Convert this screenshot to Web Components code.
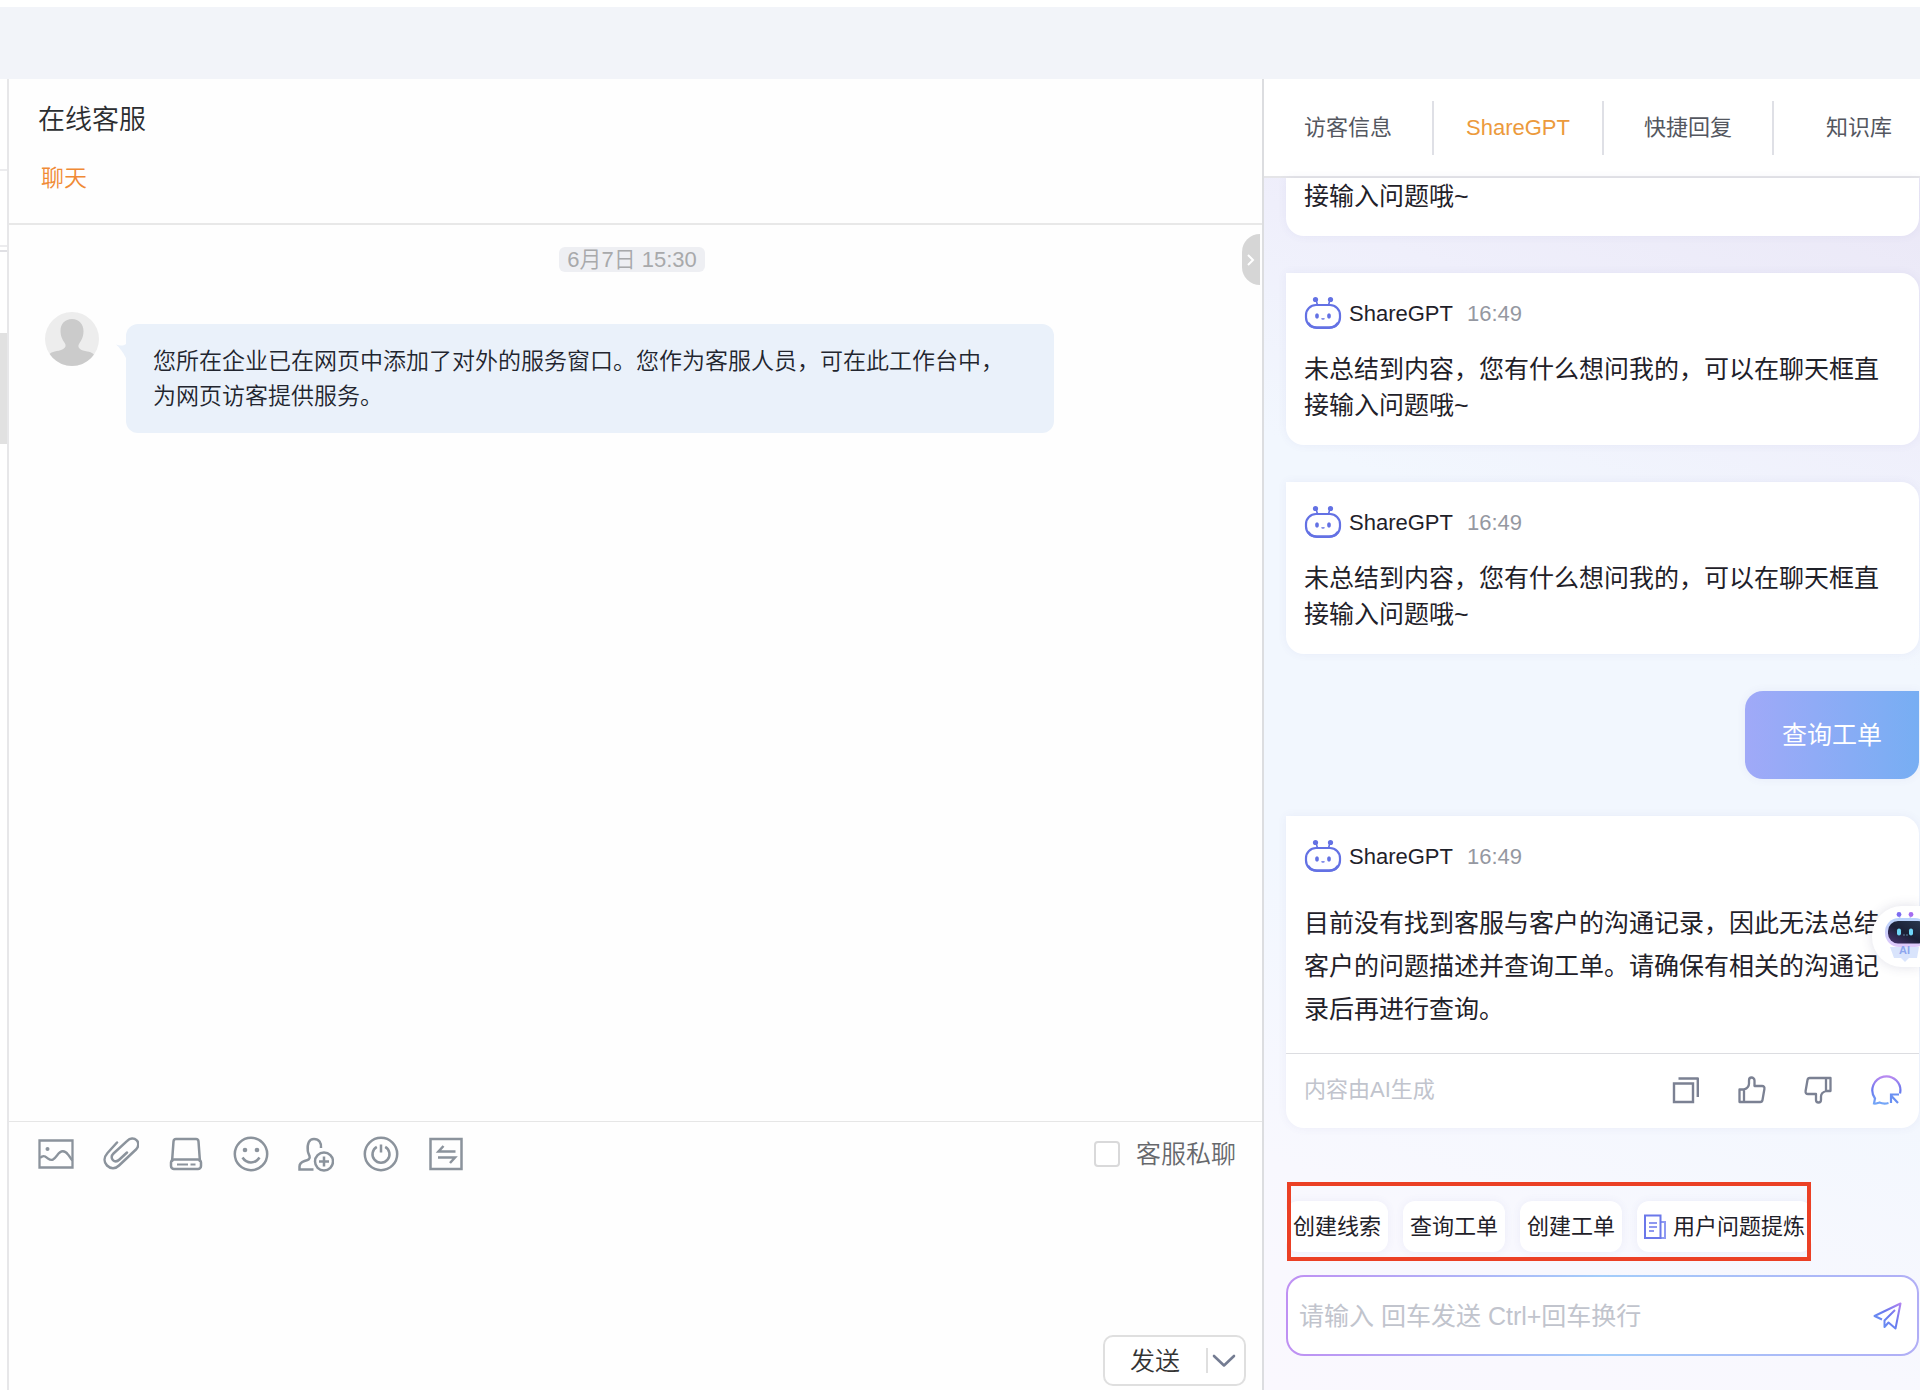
<!DOCTYPE html>
<html lang="zh-CN">
<head>
<meta charset="utf-8">
<meta name="viewport" content="width=device-width, initial-scale=1">
<title>在线客服</title>
<style>
  html, body { margin: 0; }
  body {
    font-family: "Liberation Sans", "Noto Sans CJK SC", sans-serif;
    color: #1f2129;
    background: #fff;
  }
</style>
</head>
<body>
<service-desk></service-desk>

<script>
const base = `
  *, *::before, *::after { box-sizing: border-box; }
  button, input, textarea { font: inherit; color: inherit; margin: 0; padding: 0; border: 0; background: none; outline: none; }
  button { cursor: pointer; }
`;
function define(name, css, html) {
  const tpl = document.createElement('template');
  tpl.innerHTML = `<style>${base}${css}</style>${html}`;
  customElements.define(name, class extends HTMLElement {
    constructor() {
      super();
      this.attachShadow({ mode: 'open' }).append(tpl.content.cloneNode(true));
    }
  });
}

const icons = {
  image: ['0 0 36 36', `<g fill="none" stroke="currentColor" stroke-width="2.300"><path d="M1.500 4.500h33v27h-33z"/><path d="M2 22c4-4 6-1 8 .500 4 3 6 1 9-3 4-6 8-5 11-1 2 2.500 3 4.500 4.500 6"/></g><circle cx="9.500" cy="13" r="2" fill="currentColor"/>`],
  clip: ['0 0 36 36', `<path d="M14 6.500 4.500 17c-3.500 4-4 9-.5 12.500 3.500 3.500 8.500 3.500 12 0L33 13.500c3-3 3-7 .500-9.300-2.500-2.500-6.500-2.200-9.300.600L10.500 17.500c-2.300 2.200-2.300 5-.600 6.600 1.800 1.700 4.500 1.400 6.600-.600l7.500-7" fill="none" stroke="currentColor" stroke-width="2.500" stroke-linecap="round" stroke-linejoin="round"/>`],
  disk: ['0 0 36 36', `<g fill="none" stroke="currentColor" stroke-width="2.500" stroke-linejoin="round"><path d="M4 26 5.500 5.500Q5.700 3 8 3h20q2.300 0 2.500 2.500L32 26"/><rect x="3" y="23.500" width="30" height="9.500" rx="3"/></g><path d="M9 28.500h11M22.500 28.500h5" stroke="currentColor" stroke-width="2"/>`],
  smile: ['0 0 36 36', `<circle cx="18" cy="18" r="16.200" fill="none" stroke="currentColor" stroke-width="2.500"/><circle cx="12" cy="14" r="2.300" fill="currentColor"/><circle cx="24" cy="14" r="2.300" fill="currentColor"/><path d="M9.500 21.500c4 6.500 13 6.500 17 0" fill="none" stroke="currentColor" stroke-width="2.500"/>`],
  invite: ['0 0 36 36', `<g fill="none" stroke="currentColor" stroke-width="2.500"><path d="M15.500 33.500H1.500v-3c0-3.500 2-4.500 5-5.500 4-1.200 6-2 5-5-.500-1.500-1.500-3-1.700-5C9 7.500 11 3 16 3s7.500 3.500 7 9"/><circle cx="26" cy="25.500" r="9"/><path d="M26 20.500v10M21 25.500h10"/></g>`],
  power: ['0 0 36 36', `<g fill="none" stroke="currentColor" stroke-width="2.500"><circle cx="18" cy="18" r="16.200"/><path d="M18 8.500v8"/><path d="M13.800 10.800a8.500 8.500 0 1 0 8.400 0"/></g>`],
  swap: ['0 0 36 36', `<g fill="none" stroke="currentColor" stroke-width="2.500"><path d="M2.500 3h31v30h-31z"/><path d="M27.500 15.500H10.500l5-5.500M10 21.500h17l-5 5.500"/></g>`],
  copy: ['0 0 28 28', `<g fill="none" stroke="currentColor" stroke-width="2.400"><path d="M2 7.500h19V26H2z"/><path d="M6.500 2.500h19.300V21" stroke-linejoin="round"/></g>`],
  up: ['0 0 28 28', `<g fill="none" stroke="currentColor" stroke-width="2.300" stroke-linejoin="round"><path d="M1.500 13.500h4.500V26h-4.500zM6 13.500c3-1 5-3 5-6V4.500C11 2.800 12 1.500 13.500 1.500S16.500 2.800 16.500 4.500V10H24c1.800 0 2.700 1.200 2.400 3L24.500 24c-.200 1.300-1 2-2.300 2H6"/></g>`],
  down: ['0 0 28 28', `<g fill="none" stroke="currentColor" stroke-width="2.300" stroke-linejoin="round"><path d="M26.500 15h-4.500V2h4.500zM22 15c-3 1-5 2.500-5 5.500v3.500c0 1.500-1 2.500-2.500 2.500S12 25.500 12 24v-6H4c-1.800 0-2.700-1.200-2.400-3L3.500 4C3.700 2.700 4.500 2 5.800 2H22"/></g>`],
  ask: ['0 0 32 30', `<defs><linearGradient id="g" x1="0" y1="0" x2="0" y2="1"><stop offset="0" stop-color="#b98af0"/><stop offset=".5" stop-color="#6a78ee"/><stop offset="1" stop-color="#74a6f7"/></linearGradient></defs><path d="M30 18.500A14 14 0 1 0 5 23.500L4 28.500c2 .500 4-.800 5.500-1 3 1.300 6 1.300 9 .500" fill="none" stroke="url(#g)" stroke-width="2.200"/><path d="M28 28 21 20.500M21 28v-8.500h8" fill="none" stroke="#6a90f2" stroke-width="2.200"/>`],
  send: ['0 0 30 28', `<defs><linearGradient id="g" x1="1" y1="0" x2="0" y2="1"><stop offset="0" stop-color="#b184f0"/><stop offset=".45" stop-color="#6a78ee"/><stop offset="1" stop-color="#6a9cf6"/></linearGradient></defs><path d="M10 17.500 2.500 14 28.500 1.500 23.500 26.500 16.500 20.500 12.500 25V18.500L23 8" fill="none" stroke="url(#g)" stroke-width="2" stroke-linejoin="round"/>`],
  doc: ['0 0 22 26', `<path d="M16.500 8H21v16h-4.500" fill="none" stroke="#8e9af2" stroke-width="2"/><path d="M1 1.500h15.500V24H1z" fill="none" stroke="#6b78ea" stroke-width="2"/><path d="M5 9h8M5 13h8M5 17h5" stroke="#6b78ea" stroke-width="1.600"/>`],
  chevron: ['0 0 24 14', `<path d="M2 2l10 9.500L22 2" fill="none" stroke="currentColor" stroke-width="2.600" stroke-linecap="round" stroke-linejoin="round"/>`],
  bot: ['0 0 38 36', `<g fill="none" stroke="#6371e4"><rect x="2" y="9" width="34" height="22.500" rx="10" stroke-width="2.200"/><path d="M4 27c3 5 8 4.800 15 4.800S31 32 34 27" stroke-width="2.600"/><path d="M13.500 9 12 4M24.500 9l1.500-5" stroke-width="1.600"/><path d="M17.500 22.500q1.500 1 3 0" stroke-width="1.400"/></g><g fill="#6371e4"><circle cx="11.500" cy="3.500" r="2.600"/><circle cx="26.500" cy="3.500" r="2.600"/><ellipse cx="13" cy="20" rx="1.900" ry="2.700"/><ellipse cx="25" cy="20" rx="1.900" ry="2.700"/></g>`],
  avatar: ['0 0 54 54', `<defs><clipPath id="c"><circle cx="27" cy="27" r="27"/></clipPath></defs><g clip-path="url(#c)"><path d="M0 0h54v54H0z" fill="#ededed"/><path d="M27 7c7 0 11.500 5 11.500 12 0 6-2 9-4.500 13-1.500 3 0 5 4 6.500 6 1.800 10 1 12 6V54H4V44c1-5 6-4 12-6 4-1.500 5.500-3.500 4-6.500-2.500-4-4.500-7-4.500-13C15.500 12 20 7 27 7z" fill="#cbcbcb"/></g>`],
  tail: ['0 0 10 14', `<path d="M10 0v14C7 8 3 3 0 0.500 4 2 7 2 10 0z" fill="#eaf1fa"/>`],
  assistant: ['0 0 40 52', `<defs><linearGradient id="f" x1="0" y1="1" x2="1" y2="0"><stop offset="0" stop-color="#4b3472"/><stop offset=".45" stop-color="#1b2036"/><stop offset="1" stop-color="#2b3c52"/></linearGradient><linearGradient id="h" x1="0" y1="0" x2="0" y2="1"><stop offset="0" stop-color="#b8d4fb"/><stop offset="1" stop-color="#e0c8fa"/></linearGradient></defs><path d="M15 8l-1-4M25 8l1-4" stroke="#c9d3fa" stroke-width="1.500"/><circle cx="14" cy="3.500" r="2.400" fill="#7c6cf0"/><circle cx="26" cy="3.500" r="2.400" fill="#a56cf0"/><rect x="0" y="7" width="44" height="29" rx="14" fill="url(#h)"/><rect x="3" y="10" width="40" height="22.500" rx="10" fill="url(#f)"/><rect x="12" y="17.500" width="4" height="7" rx="2" fill="#6fd6f8"/><rect x="24" y="17.500" width="4" height="7" rx="2" fill="#6fd6f8"/><path d="M18.500 24h1M21.500 24h1" stroke="#9fe3fa" stroke-width="1"/><path d="M5 36h29l-2 11H24l-4 4-4-4H9z" fill="#d9e4fc"/>`]
};
customElements.define('ui-icon', class extends HTMLElement {
  connectedCallback() {
    const [box, body] = icons[this.getAttribute('name')];
    const [, , w, h] = box.split(' ');
    this.attachShadow({ mode: 'open' }).innerHTML =
      `<style>:host{display:inline-flex;flex:none}svg{display:block;overflow:hidden}</style>
       <svg width="${w}" height="${h}" viewBox="${box}" aria-hidden="true">${body}</svg>`;
  }
});

define('list-edge', `
  :host { display: block; flex: none; width: 9px; background: #fff; border-right: 2px solid #e7e7e9; padding-top: 90px; }
  hr { margin: 0; border: 0; height: 2px; background: #ececee; }
  .filter { margin-top: 74px; }
  .list { margin-top: 3px; background: #e0e0e4; }
  .selected { margin-top: 81px; height: 111px; background: #e1e1e1; }
`, `<hr><hr class="filter"><hr class="list"><div class="selected"></div>`);

define('chat-header', `
  :host { display: block; flex: none; border-bottom: 2px solid #e8e8e8; padding: 21px 29px 25px; }
  h1 { margin: 0 0 18px; font-size: 27px; line-height: 40px; font-weight: 350; color: #2b2d30; }
  a { display: block; width: max-content; margin-left: 3px; font-size: 23px; line-height: 40px; font-weight: 350; color: #f08a35; text-decoration: none; }
`, `<h1>在线客服</h1><a href="#chat">聊天</a>`);

define('chat-message', `
  :host { display: flex; align-items: flex-start; padding: 0 36px; }
  .tail { margin: 32px 0 0 17px; }
  p { flex: 0 1 928px; margin: 12px 0 0; padding: 20px 32px 19px 27px; border-radius: 12px; background: #eaf1fa; color: #22252e; font-size: 23px; line-height: 35px; font-weight: 350; }
`, `<ui-icon name="avatar"></ui-icon><ui-icon class="tail" name="tail"></ui-icon><p><slot></slot></p>`);

define('chat-history', `
  :host { display: flex; flex-direction: column; flex: 1; position: relative; }
  time { align-self: center; margin: 22px 7px 40px 0; padding: 0 8px; border-radius: 6px; background: #eeeff3; color: #a8a9ab; font-size: 22px; line-height: 25px; font-weight: 350; }
  button { position: absolute; top: 9px; right: 2px; width: 18px; height: 51px; border-radius: 18px 0 0 18px; background: #d6d6d6; color: #fff; display: grid; place-items: center; }
  svg { display: block; }
`, `<time>6月7日 15:30</time>
<chat-message>您所在企业已在网页中添加了对外的服务窗口。您作为客服人员，可在此工作台中，为网页访客提供服务。</chat-message>
<button aria-label="收起侧栏"><svg width="10" height="14" viewBox="0 0 10 14"><path d="M2 2l5 5-5 5" fill="none" stroke="#fff" stroke-width="2"/></svg></button>`);

define('chat-composer', `
  :host { display: flex; flex-direction: column; flex: none; height: 269px; border-top: 1px solid #e6e6e6; padding: 14px 16px 4px 29px; }
  .bar { display: flex; align-items: center; justify-content: space-between; padding-right: 10px; }
  .tools { display: flex; gap: 29px; color: #8b939c; }
  .tools button { display: flex; }
  label { display: flex; align-items: center; gap: 16px; font-size: 25px; line-height: 36px; font-weight: 350; color: #66686c; }
  input { appearance: none; width: 26px; height: 26px; border: 2px solid #d9d9da; border-radius: 4px; background: #fff; }
  textarea { flex: 1; resize: none; font-size: 23px; line-height: 35px; }
  .send { align-self: flex-end; display: flex; align-items: center; height: 51px; border: 2px solid #dfdfdf; border-radius: 10px; background: #fff; }
  .go { padding: 0 26px 0 25px; font-size: 25px; line-height: 36px; font-weight: 350; color: #333; }
  .more { display: flex; align-items: center; height: 25px; border-left: 2px solid #dfdfdf; padding: 0 8px 0 4px; color: #747c92; }
`, `<div class="bar">
  <div class="tools">
    <button aria-label="图片"><ui-icon name="image"></ui-icon></button>
    <button aria-label="附件"><ui-icon name="clip"></ui-icon></button>
    <button aria-label="网盘"><ui-icon name="disk"></ui-icon></button>
    <button aria-label="表情"><ui-icon name="smile"></ui-icon></button>
    <button aria-label="邀请"><ui-icon name="invite"></ui-icon></button>
    <button aria-label="结束"><ui-icon name="power"></ui-icon></button>
    <button aria-label="转接"><ui-icon name="swap"></ui-icon></button>
  </div>
  <label for="private"><input id="private" type="checkbox">客服私聊</label>
</div>
<textarea aria-label="消息"></textarea>
<div class="send"><button class="go">发送</button><button class="more" aria-label="更多"><ui-icon name="chevron"></ui-icon></button></div>`);

define('side-tabs', `
  :host { display: flex; align-items: center; flex: none; height: 99px; overflow: hidden; background: #fff; border-bottom: 2px solid #e5e5e8; }
  button { flex: none; width: 170px; height: 54px; font-size: 22px; line-height: 32px; color: #54575f; border-right: 2px solid #dfe0e6; }
  .on { color: #ec9a3c; }
  button:last-child { border: 0; }
`, `<button>访客信息</button><button class="on">ShareGPT</button><button>快捷回复</button><button>知识库</button>`);

define('gpt-card', `
  :host { display: block; border-radius: 0 18px 18px 18px; background: #fff; box-shadow: 0 0 10px rgba(90, 90, 170, .07); font-size: 25px; line-height: 36px; }
  :host([continued]) { border-radius: 0 0 18px 18px; }
  :host([continued]) header { display: none; }
  :host([answer]) { line-height: 43px; }
  header { display: flex; align-items: center; height: 58px; padding: 24px 18px 0; font-size: 22px; line-height: 34px; }
  ui-icon { margin-right: 7px; }
  time { margin-left: 14px; color: #9598a1; }
  p { margin: 0; padding: 20px 18px 22px; }
  :host([continued]) p { padding-top: 0; }
  :host([answer]) p { padding-top: 28px; }
`, `<header><ui-icon name="bot"></ui-icon><span>ShareGPT</span><time>16:49</time></header>
<p><slot></slot></p><slot name="footer"></slot>`);

define('card-actions', `
  :host { display: flex; align-items: center; justify-content: space-between; height: 75px; border-top: 1px solid #dcdde1; padding: 0 17px 2px 18px; font-size: 22px; line-height: 32px; color: #c1c4cd; }
  div { display: flex; align-items: center; gap: 38px; color: #7b8193; }
  button { display: flex; }
`, `<span>内容由AI生成</span>
<div>
  <button aria-label="复制"><ui-icon name="copy"></ui-icon></button>
  <button aria-label="赞"><ui-icon name="up"></ui-icon></button>
  <button aria-label="踩"><ui-icon name="down"></ui-icon></button>
  <button aria-label="追问"><ui-icon name="ask"></ui-icon></button>
</div>`);

define('user-bubble', `
  :host { display: block; align-self: flex-end; padding: 26px 37px; border-radius: 18px 0 18px 18px; background: linear-gradient(90deg, #a0a9f8, #77aef3); box-shadow: 0 0 10px rgba(90, 90, 170, .07); color: #fff; font-size: 25px; line-height: 36px; }
`, `<slot></slot>`);

define('assistant-float', `
  :host { display: flex; align-items: center; width: 48px; height: 61px; padding-left: 13px; border-radius: 30px 0 0 30px; background: #fff; box-shadow: 0 0 12px rgba(60, 60, 110, .16); overflow: hidden; position: relative; }
  button { display: flex; }
  span { position: absolute; left: 27px; bottom: 11px; font-size: 11px; line-height: 12px; font-weight: 700; color: #8ea6ee; }
`, `<button aria-label="AI助手"><ui-icon name="assistant"></ui-icon></button><span>AI</span>`);

define('quick-actions', `
  :host { display: flex; gap: 15px; width: max-content; position: relative; padding: 19px 0 9px; overflow: hidden; }
  :host::after { content: ""; position: absolute; inset: 0 1px; border: 4px solid #eb4025; pointer-events: none; }
  button { display: flex; align-items: center; gap: 7px; height: 51px; padding: 0 7px; border-radius: 12px; background: #fff; box-shadow: 0 0 8px rgba(90, 90, 170, .07); font-size: 22px; line-height: 32px; }
`, `<button>创建线索</button><button>查询工单</button><button>创建工单</button><button><ui-icon name="doc"></ui-icon>用户问题提炼</button>`);

define('ask-box', `
  :host { display: flex; align-items: center; height: 81px; padding: 0 15px 0 11px; border: 2px solid transparent; border-radius: 18px;
    background: linear-gradient(#fff, #fff) padding-box, linear-gradient(90deg, #bf90f3, #a3cdfa 50%, #b1aef6) border-box; }
  input { flex: 1; min-width: 0; height: 36px; font-size: 25px; line-height: 36px; }
  input::placeholder { color: #c1c4cd; opacity: 1; }
  button { display: flex; }
`, `<input type="text" aria-label="问题" placeholder="请输入 回车发送 Ctrl+回车换行"><button aria-label="发送问题"><ui-icon name="send"></ui-icon></button>`);

define('gpt-panel', `
  :host { display: flex; flex-direction: column; flex: none; width: 658px; border-left: 2px solid #dcdde0; }
  .feed { flex: 1; display: flex; flex-direction: column; gap: 37px; padding: 0 1px 34px 22px; position: relative;
    background: linear-gradient(200deg, #eae7f6 0, #efeffb 18%, #f2f7fe 34%, #f2f7fe 62%, #f8f8fe 84%, #faf8fe 100%); }
  assistant-float { position: absolute; right: 0; top: 728px; }
  quick-actions { margin-top: auto; }
  ask-box { margin-top: -23px; }
`, `<side-tabs></side-tabs>
<div class="feed">
  <gpt-card continued>接输入问题哦~</gpt-card>
  <gpt-card>未总结到内容，您有什么想问我的，可以在聊天框直接输入问题哦~</gpt-card>
  <gpt-card>未总结到内容，您有什么想问我的，可以在聊天框直接输入问题哦~</gpt-card>
  <user-bubble>查询工单</user-bubble>
  <gpt-card answer>目前没有找到客服与客户的沟通记录，因此无法总结客户的问题描述并查询工单。请确保有相关的沟通记录后再进行查询。<card-actions slot="footer"></card-actions></gpt-card>
  <quick-actions></quick-actions>
  <ask-box></ask-box>
  <assistant-float></assistant-float>
</div>`);

define('service-desk', `
  :host { display: flex; flex-direction: column; min-height: 100vh; }
  .top { flex: none; height: 79px; border-top: 7px solid #fff; background: #f2f4f9; }
  .body { flex: 1; display: flex; }
  main { flex: 1; min-width: 0; display: flex; flex-direction: column; background: #fefefe; }
`, `<div class="top"></div>
<div class="body">
  <list-edge></list-edge>
  <main><chat-header></chat-header><chat-history></chat-history><chat-composer></chat-composer></main>
  <gpt-panel></gpt-panel>
</div>`);
</script>
</body>
</html>
